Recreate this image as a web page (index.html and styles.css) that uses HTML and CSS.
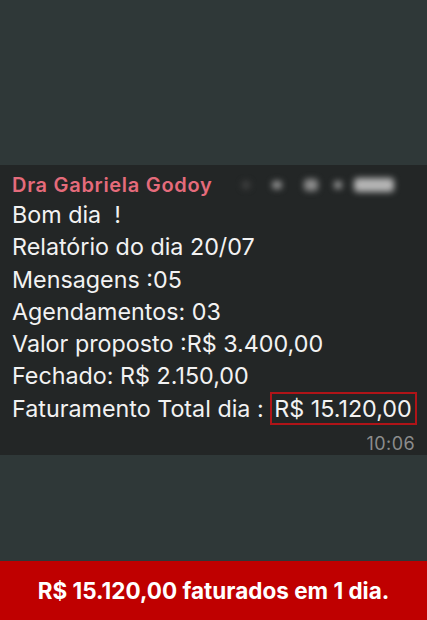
FILE: index.html
```html
<!DOCTYPE html>
<html lang="pt">
<head>
<meta charset="utf-8">
<link rel="stylesheet" href="styles.css">
</head>
<body>
<div class="page">
  <div class="top-space"></div>
  <div class="bubble">
    <div class="head">
      <span class="name">Dra Gabriela Godoy</span>
      <span class="blurred">
        <i class="b b1"></i><i class="b b2"></i><i class="b b3"></i><i class="b b4"></i><i class="b b5"></i>
      </span>
    </div>
    <div class="line">Bom dia&nbsp; !</div>
    <div class="line">Relatório do dia 20/07</div>
    <div class="line">Mensagens :05</div>
    <div class="line">Agendamentos: 03</div>
    <div class="line">Valor proposto :R$ 3.400,00</div>
    <div class="line">Fechado: R$ 2.150,00</div>
    <div class="line">Faturamento Total dia : <span class="boxed">R$ 15.120,00</span></div>
    <div class="time">10:06</div>
  </div>
  <div class="spacer"></div>
  <div class="banner">R$ 15.120,00 faturados em 1 dia.</div>
</div>
</body>
</html>
```
FILE: styles.css
```css
html, body {
  margin: 0;
  padding: 0;
  background: #2f3838;
}
.page {
  width: 427px;
  height: 620px;
  display: flex;
  flex-direction: column;
  overflow: hidden;
}
.top-space {
  height: 165px;
  flex: none;
}
.bubble {
  background: #232626;
  padding: 6px 12px 4px 12px;
  font-family: Inter, "Liberation Sans", sans-serif;
  color: #f2f2f2;
  font-size: 23.3px;
  flex: none;
  height: 290px;
  box-sizing: border-box;
}
.head {
  display: flex;
  align-items: center;
  height: 28px;
}
.name {
  color: #e56b7b;
  font-weight: 600;
  font-size: 20px;
  letter-spacing: 0.7px;
}
.blurred {
  display: flex;
  align-items: center;
  margin-left: 30px;
  filter: blur(3px);
}
.b {
  display: block;
  border-radius: 4px;
}
.b1 { width: 8px; height: 8px; background: #444; margin-right: 22px; }
.b2 { width: 10px; height: 8px; background: #9a9a9a; margin-right: 22px; }
.b3 { width: 14px; height: 12px; background: #8d8d8d; margin-right: 16px; }
.b4 { width: 8px; height: 8px; background: #a0a0a0; margin-right: 12px; }
.b5 { width: 40px; height: 14px; background: #b5b5b5; }
.line {
  line-height: 32.3px;
  white-space: nowrap;
}
.boxed {
  border: 2px solid #b01418;
  padding: 0 3px 0 2px;
}
.time {
  text-align: right;
  color: #8c8c8c;
  font-size: 18px;
  letter-spacing: 0.4px;
  margin-top: 8px;
}
.spacer {
  flex: 1;
}
.banner {
  background: #bf0000;
  color: #ffffff;
  font-family: Inter, "Liberation Sans", sans-serif;
  font-weight: bold;
  font-size: 22.5px;
  height: 59px;
  display: flex;
  align-items: center;
  justify-content: center;
  flex: none;
}
```
